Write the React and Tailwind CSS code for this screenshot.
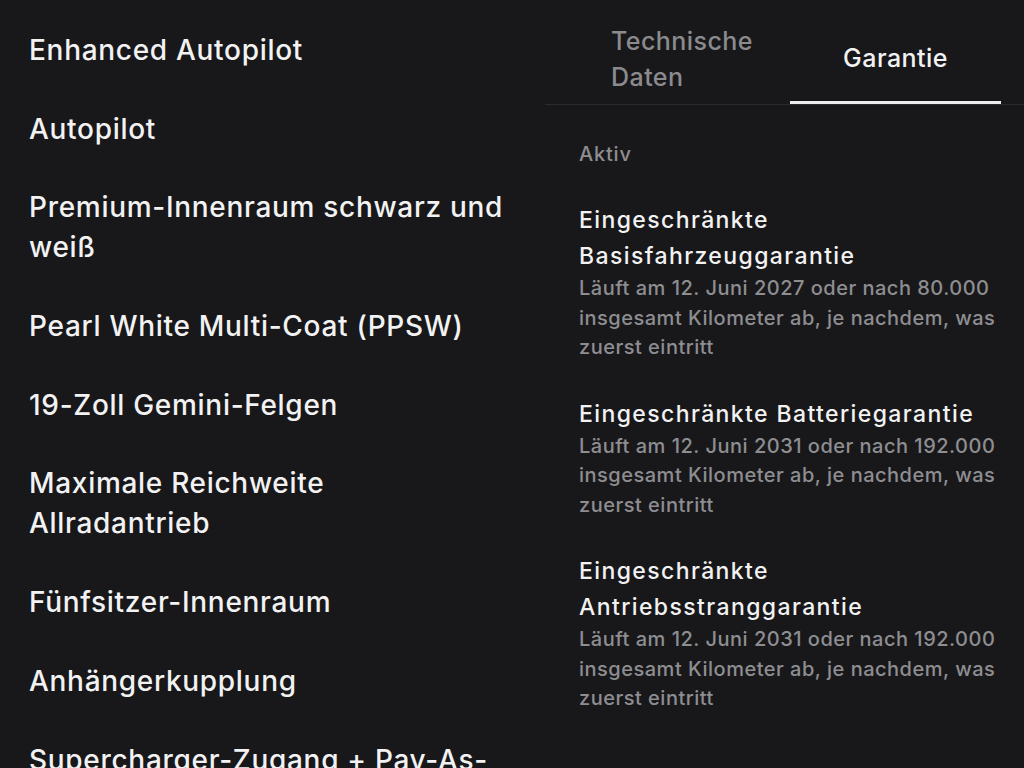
import React from "react";

const options = [
  "Enhanced Autopilot",
  "Autopilot",
  "Premium-Innenraum schwarz und weiß",
  "Pearl White Multi-Coat (PPSW)",
  "19-Zoll Gemini-Felgen",
  "Maximale Reichweite Allradantrieb",
  "Fünfsitzer-Innenraum",
  "Anhängerkupplung",
  "Supercharger-Zugang + Pay-As-You-Go",
];

const warranties = [
  {
    title: "Eingeschränkte Basisfahrzeuggarantie",
    desc: "Läuft am 12. Juni 2027 oder nach 80.000 insgesamt Kilometer ab, je nachdem, was zuerst eintritt",
  },
  {
    title: "Eingeschränkte Batteriegarantie",
    desc: "Läuft am 12. Juni 2031 oder nach 192.000 insgesamt Kilometer ab, je nachdem, was zuerst eintritt",
  },
  {
    title: "Eingeschränkte Antriebsstranggarantie",
    desc: "Läuft am 12. Juni 2031 oder nach 192.000 insgesamt Kilometer ab, je nachdem, was zuerst eintritt",
  },
];

const App = () => {
  return (
    <div
      className="flex h-screen overflow-hidden bg-[#18181b] text-[#f2f2f2]"
      style={{ fontFamily: "Inter, 'Open Sans', sans-serif" }}
    >
      {/* left: options list */}
      <div className="w-[545px] shrink-0 pl-[29px] pt-[30px]">
        <ul className="flex w-[478px] flex-col gap-[38.7px]">
          {options.map((o) => (
            <li
              key={o}
              className="text-[28px] font-medium leading-[40px] tracking-[0.7px]"
            >
              {o}
            </li>
          ))}
        </ul>
      </div>

      {/* right: tabs + warranty */}
      <div className="flex-1">
        <div className="flex h-[105px] border-b border-[#2b2b2e]">
          <div className="flex w-[245px] items-center pl-[66px] pt-[14px] text-[25px] font-medium leading-[36px] tracking-[0.45px] text-[#8b8b8e]">
            Technische Daten
          </div>
          <div className="flex w-[211px] items-center justify-center border-b-[3px] border-[#ececec] pt-[14px] text-[25px] font-medium leading-[36px] tracking-[0.45px]">
            Garantie
          </div>
        </div>

        <div className="pl-[34px] pr-[24px] pt-[37px]">
          <p className="text-[20px] font-medium leading-[24px] tracking-[0.8px] text-[#8e8e91]">
            Aktiv
          </p>
          <div className="mt-[36px] flex flex-col gap-[33px]">
            {warranties.map((w) => (
              <div key={w.title}>
                <h3 className="text-[23px] font-medium leading-[36px] tracking-[1.4px]">
                  {w.title}
                </h3>
                <p className="text-[20px] font-medium leading-[29.5px] tracking-[0.5px] text-[#8e8e91]">
                  {w.desc}
                </p>
              </div>
            ))}
          </div>
        </div>
      </div>
    </div>
  );
};

export default App;
